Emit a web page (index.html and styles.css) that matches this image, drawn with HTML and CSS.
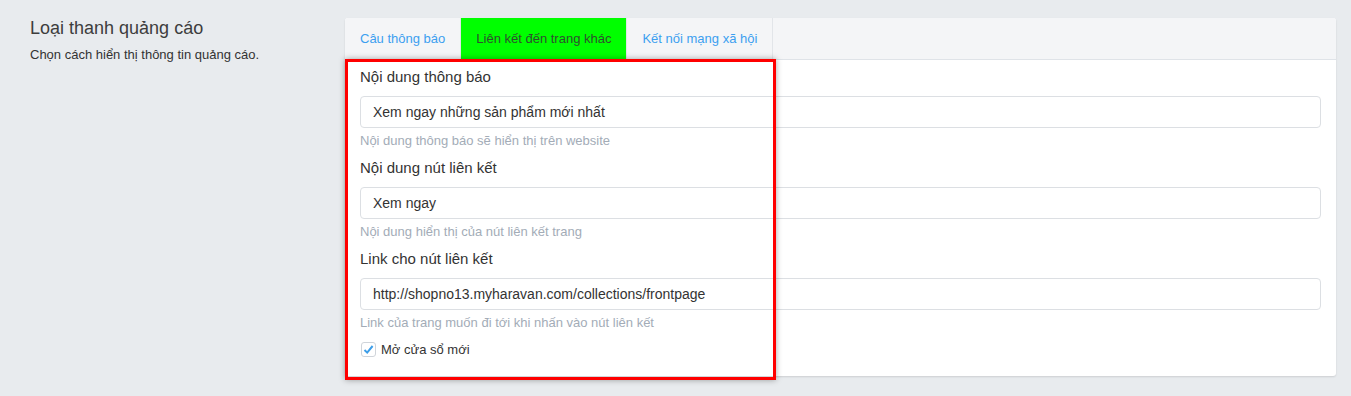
FILE: index.html
```html
<!DOCTYPE html>
<html lang="vi">
  <head>
    <meta charset="UTF-8" />
    <meta name="viewport" content="width=device-width, initial-scale=1.0" />
    <title>Loại thanh quảng cáo</title>
    <link rel="stylesheet" href="styles.css">
  </head>

  <body>
    <div class="section">
      <div class="section-info">
        <h2>Loại thanh quảng cáo</h2>
        <p>Chọn cách hiển thị thông tin quảng cáo.</p>
      </div>

      <div class="card">
        <div class="tabs">
          <a class="tab">Câu thông báo</a>
          <a class="tab active">Liên kết đến trang khác</a>
          <a class="tab">Kết nối mạng xã hội</a>
        </div>

        <div class="card-body">
          <div class="field">
            <label>Nội dung thông báo</label>
            <input type="text" value="Xem ngay những sản phẩm mới nhất" />
            <span class="hint">Nội dung thông báo sẽ hiển thị trên website</span>
          </div>

          <div class="field">
            <label>Nội dung nút liên kết</label>
            <input type="text" value="Xem ngay" />
            <span class="hint">Nội dung hiển thị của nút liên kết trang</span>
          </div>

          <div class="field">
            <label>Link cho nút liên kết</label>
            <input type="text" value="http://shopno13.myharavan.com/collections/frontpage" />
            <span class="hint">Link của trang muốn đi tới khi nhấn vào nút liên kết</span>
          </div>

          <div class="check">
            <span class="check-box">
              <svg width="11" height="11" viewBox="0 0 11 11">
                <path d="M1.5 6 L4.2 8.6 L9.6 2" fill="none" stroke="#3d9ee8" stroke-width="2" />
              </svg>
            </span>
            <span>Mở cửa sổ mới</span>
          </div>
        </div>

        <div class="highlight"></div>
      </div>
    </div>
  </body>
</html>
```

FILE: styles.css
```css
* {
  margin: 0;
  padding: 0;
  box-sizing: border-box;
}

body {
  background: #e8ebee;
  font-family: "Liberation Sans", Arial, sans-serif;
  color: #333;
}

.section {
  display: flex;
  padding: 18px 15px 20px 30px;
}

.section-info {
  width: 315px;
  flex-shrink: 0;
}

.section-info h2 {
  font-size: 18px;
  font-weight: normal;
  color: #3d3d3d;
  line-height: 22px;
  margin-top: -1px;
}

.section-info p {
  font-size: 13px;
  color: #333;
  margin-top: 8px;
}

.card {
  position: relative;
  flex: 1;
  background: #fff;
  border-radius: 3px;
  box-shadow: 0 1px 2px rgba(0, 0, 0, 0.12);
}

.tabs {
  display: flex;
  height: 42px;
  background: #f4f5f7;
  border-bottom: 1px solid #dfe3e8;
  border-radius: 3px 3px 0 0;
}

.tab {
  padding: 0 15px;
  line-height: 41px;
  font-size: 13px;
  color: #3c9ff0;
  border-right: 1px solid #e2e5e9;
}

.tab.active {
  background: #00ff00;
  color: #2f4f2f;
}

.card-body {
  padding: 7px 15px 19px 15px;
}

.field label {
  display: block;
  font-size: 15px;
  line-height: 20px;
  color: #333;
  margin-bottom: 9px;
}

.field input {
  display: block;
  width: 100%;
  height: 32px;
  padding: 0 12px;
  border: 1px solid #dcdfe3;
  border-radius: 4px;
  font-family: "Liberation Sans", Arial, sans-serif;
  font-size: 14px;
  color: #333;
  background: #fff;
}

.field .hint {
  display: block;
  margin-top: 4px;
  margin-bottom: 8px;
  font-size: 13px;
  line-height: 18px;
  color: #a3acb7;
}

.check {
  display: flex;
  align-items: center;
  gap: 5px;
  margin-top: 10px;
  font-size: 13px;
  color: #333;
}

.check-box {
  display: flex;
  justify-content: center;
  align-items: center;
  width: 15px;
  height: 15px;
  margin-left: 1px;
  border: 1px solid #cfd4da;
  border-radius: 3px;
  background: #fff;
}

.highlight {
  position: absolute;
  left: 0;
  top: 41px;
  width: 431px;
  height: 321px;
  border: 3px solid #f00;
  box-shadow: 0 0 6px rgba(0, 0, 0, 0.35);
  pointer-events: none;
}
```
